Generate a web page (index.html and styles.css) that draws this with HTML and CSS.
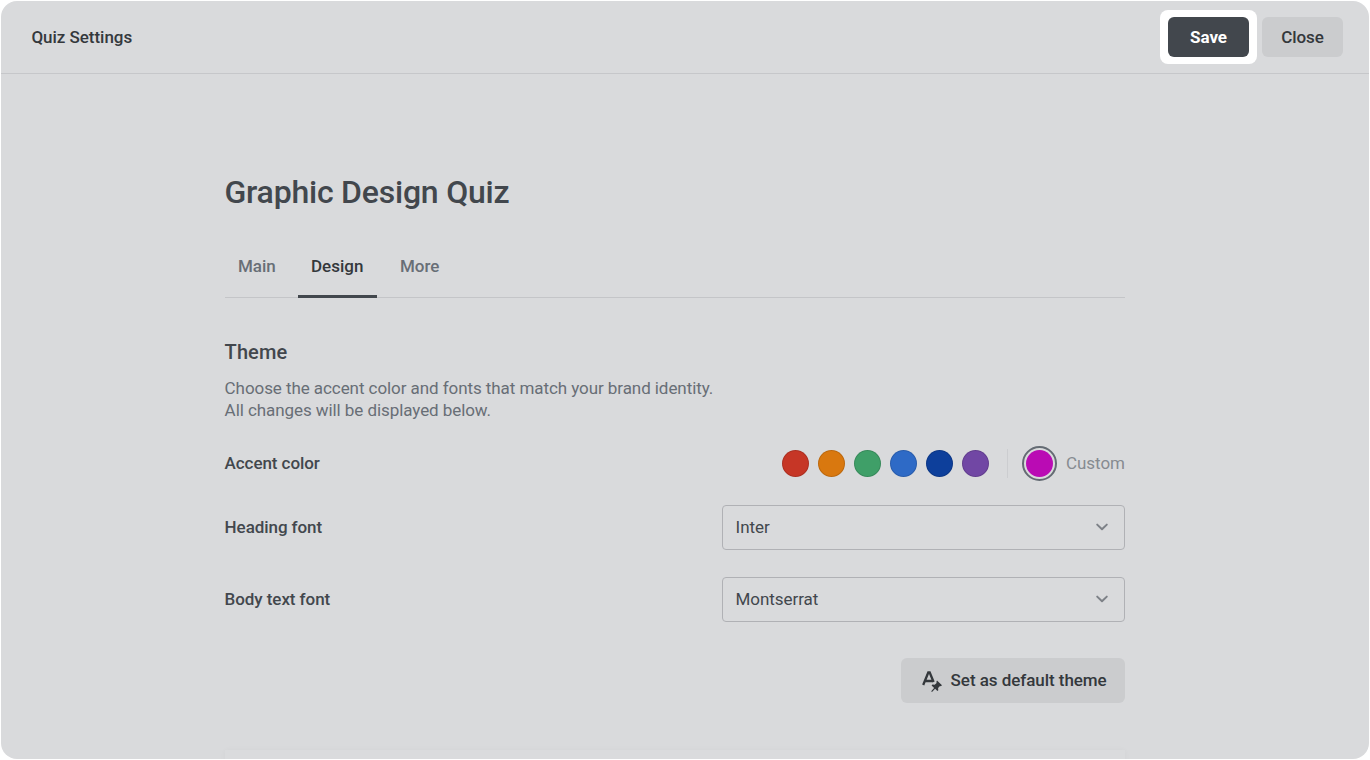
FILE: index.html
```html
<!DOCTYPE html>
<html lang="en">
<head>
<meta charset="utf-8">
<title>Quiz Settings</title>
<link rel="stylesheet" href="styles.css">
</head>
<body>
<div class="window">
  <header class="topbar">
    <span class="topbar-title">Quiz Settings</span>
    <div class="actions">
      <div class="highlight"><button class="btn btn-save">Save</button></div>
      <button class="btn btn-close">Close</button>
    </div>
  </header>
  <main class="content">
    <h1 class="title">Graphic Design Quiz</h1>
    <nav class="tabs">
      <a class="tab">Main</a>
      <a class="tab active">Design</a>
      <a class="tab">More</a>
    </nav>
    <h2 class="section-title">Theme</h2>
    <p class="description">Choose the accent color and fonts that match your brand identity.<br>All changes will be displayed below.</p>
    <div class="row row-color">
      <span class="label">Accent color</span>
      <div class="swatches">
        <span class="swatch red"></span>
        <span class="swatch orange"></span>
        <span class="swatch green"></span>
        <span class="swatch blue"></span>
        <span class="swatch navy"></span>
        <span class="swatch purple"></span>
        <span class="divider"></span>
        <span class="ring"><span class="swatch magenta"></span></span>
        <span class="custom">Custom</span>
      </div>
    </div>
    <div class="row row-select">
      <span class="label">Heading font</span>
      <div class="select"><span>Inter</span><svg class="chevron" viewBox="0 0 14 10" width="14" height="10"><path d="M2.2 2.6 L7 7.2 L11.8 2.6"/></svg></div>
    </div>
    <div class="row row-select">
      <span class="label">Body text font</span>
      <div class="select"><span>Montserrat</span><svg class="chevron" viewBox="0 0 14 10" width="14" height="10"><path d="M2.2 2.6 L7 7.2 L11.8 2.6"/></svg></div>
    </div>
    <div class="default-row">
      <button class="btn-default">
        <svg class="pin-icon" viewBox="0 0 22 22" width="22" height="22">
          <path class="letter" d="M2.2 15 L7.3 2.5 H8.7 L12.6 12 M4.2 11 H12"/>
          <path class="pin" d="M16 10.6 L21 15.3 L19.8 16.2 L19 16 L17.1 18 L17.3 20.2 L16.4 21 L14.1 18.8 L11 22 L10.2 21.3 L13.1 17.9 L10.6 15.5 L11.4 14.6 L13.7 14.8 L15.6 12.9 L15.4 11.7 Z"/>
        </svg>
        <span class="btn-text">Set as default theme</span>
      </button>
    </div>
    <div class="preview"></div>
  </main>
</div>
</body>
</html>
```

FILE: styles.css
```css
* { box-sizing: border-box; }
body {
  margin: 0;
  padding: 1px;
  height: 760px;
  overflow: hidden;
  background: #fff;
  font-family: Roboto, sans-serif;
  font-size: 17px;
  color: #42474d;
}
button { font-family: inherit; border: 0; padding: 0; margin: 0; }
.window {
  height: 758px;
  border-radius: 16px;
  overflow: hidden;
  background: #d9dadc;
}
.topbar {
  display: flex;
  align-items: center;
  justify-content: space-between;
  height: 73px;
  padding: 0 26px 0 30.4px;
  border-bottom: 1px solid #c6c7ca;
}
.topbar-title { font-size: 17px; font-weight: 500; letter-spacing: -0.03px; color: #34383c; }
.actions { display: flex; align-items: center; gap: 5px; }
.highlight { padding: 7px 8px; background: #fff; border-radius: 8px; }
.btn {
  display: block;
  width: 81px;
  height: 40px;
  border-radius: 6px;
  font-size: 17px;
  font-weight: 500;
  letter-spacing: -0.04px;
}
.btn-save { background: #42474d; color: #fff; font-weight: 700; }
.btn-close { background: #cbccce; color: #34383c; }
.content { width: 900px; margin-left: 224px; }
.title {
  margin: 0 0 0 -0.5px;
  padding-top: 98px;
  font-size: 32px;
  line-height: 40px;
  font-weight: 500;
  letter-spacing: -0.22px;
}
.tabs {
  display: flex;
  height: 64px;
  margin-top: 22px;
  border-bottom: 1px solid #c4c5c8;
}
.tab {
  height: 64px;
  padding: 20px 0 0 13px;
  width: 73px;
  font-size: 17px;
  line-height: 24px;
  font-weight: 500;
  color: #686e76;
}
.tab.active {
  width: 79px;
  margin-right: 10px;
  color: #34383c;
  border-bottom: 3px solid #42474d;
  border-radius: 3px 3px 0 0;
}
.section-title {
  margin: 40px 0 0 -0.4px;
  font-size: 20px;
  line-height: 28px;
  font-weight: 500;
  letter-spacing: 0.1px;
}
.description { margin: 11px 0 0 -0.4px; font-size: 17px; line-height: 22px; letter-spacing: -0.07px; color: #686e76; }
.row { display: flex; align-items: center; justify-content: space-between; }
.label { margin-left: -0.4px; font-size: 17px; font-weight: 500; letter-spacing: -0.07px; }
.row-color { height: 36px; margin: 24px 0; }
.swatches { display: flex; align-items: center; gap: 9px; }
.swatch {
  width: 27px;
  height: 27px;
  border-radius: 50%;
  border: 1px solid rgba(0, 0, 0, 0.13);
}
.red { background: #c63626; }
.orange { background: #d9780f; }
.green { background: #3f9f68; }
.blue { background: #2e6ac6; }
.navy { background: #0d3f9b; }
.purple { background: #7147a4; }
.magenta { background: #ba0bb4; border: 0; }
.divider { width: 1px; height: 29px; margin: 0 5px 0 9px; background: #cccdd0; }
.ring {
  display: flex;
  align-items: center;
  justify-content: center;
  width: 35px;
  height: 35px;
  border: 2px solid #646b73;
  border-radius: 50%;
}
.custom { width: 59px; color: #868b91; letter-spacing: -0.05px; }
.row-select { height: 45px; margin-bottom: 27px; }
.row-select .label { padding-bottom: 2px; }
.select {
  display: flex;
  align-items: center;
  justify-content: space-between;
  width: 403px;
  height: 45px;
  padding: 0 15px 2px 12.6px;
  border: 1px solid #b0b1b5;
  border-radius: 4px;
  letter-spacing: -0.07px;
}
.chevron path { fill: none; stroke: #7d8187; stroke-width: 2; stroke-linecap: round; stroke-linejoin: round; }
.default-row { display: flex; justify-content: flex-end; margin-top: 36px; }
.btn-default {
  display: flex;
  align-items: center;
  gap: 7.6px;
  width: 224px;
  height: 45px;
  padding-left: 20px;
  border-radius: 6px;
  background: #cbccce;
  color: #34383c;
  font-size: 17px;
  font-weight: 500;
  letter-spacing: -0.05px;
  white-space: nowrap;
}
.btn-text { padding-bottom: 2px; }
.letter { fill: none; stroke: #34383c; stroke-width: 2.3; }
.pin { fill: #34383c; }
.preview { height: 40px; margin-top: 47px; background: #dadbdd; box-shadow: 0 0 6px rgba(0, 0, 0, 0.03); }
```
